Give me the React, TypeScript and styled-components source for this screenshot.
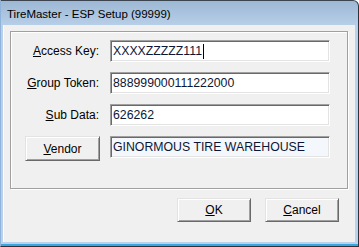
import React from "react";
import styled, { createGlobalStyle } from "styled-components";

const Global = createGlobalStyle`
  html, body { margin: 0; padding: 0; background: #ffffff; }
  body { width: 359px; height: 247px; overflow: hidden; }
  * { box-sizing: border-box; }
`;

const Window = styled.div`
  width: 359px;
  height: 247px;
  display: flex;
  flex-direction: column;
  background: linear-gradient(#9db8d5 0px, #b8cfe8 25px, #b9d1ea 26px);
  border-top: 1px solid #3c4450;
  border-right: 1px solid #2c333c;
  border-bottom: 1px solid #2c333c;
  border-left: 1px solid #8fb3da;
  border-top-right-radius: 6px;
  font-family: "Liberation Sans", Arial, sans-serif;
`;

const TitleBar = styled.div`
  height: 24px;
  flex: none;
  display: flex;
  align-items: center;
  padding: 2px 0 0 6px;
  font-family: "Liberation Sans", Arial, sans-serif;
  font-size: 11.5px;
  color: #000;
`;

const Frame = styled.div`
  flex: 1;
  display: flex;
  padding: 0 3px 2px 2px;
  border-bottom: 2px solid #3aa6e0;
`;

const Client = styled.div`
  flex: 1;
  display: flex;
  flex-direction: column;
  background: #f0f0f0;
  border-left: 1px solid #ffffff;
  padding: 6px 7px 0 6px;
`;

const GroupBox = styled.div`
  border: 1px solid #a0a0a0;
  box-shadow: inset 1px 1px 0 #ffffff, 1px 1px 0 #ffffff;
  display: grid;
  grid-template-columns: 88px 220px;
  column-gap: 11px;
  row-gap: 10px;
  grid-auto-rows: 22px;
  align-items: center;
  padding: 8px 14px 30px 0;
`;

const Label = styled.label`
  justify-self: end;
  font-size: 12px;
  color: #000;
  white-space: nowrap;
`;

const Field = styled.div<{ $readOnly?: boolean }>`
  height: 22px;
  display: flex;
  align-items: center;
  padding: 0 0 0 2px;
  font-size: 12.3px;
  color: #0c1634;
  white-space: nowrap;
  overflow: hidden;
  background: ${(p) => (p.$readOnly ? "#f4f8fd" : "#ffffff")};
  border-top: 1px solid #a0a0a0;
  border-left: 1px solid #a0a0a0;
  border-right: 1px solid #ffffff;
  border-bottom: 1px solid #ffffff;
  box-shadow: inset 1px 1px 0 #696969, inset -1px -1px 0 #e3e3e3;
  align-self: ${(p) => (p.$readOnly ? "start" : "center")};
`;

const Caret = styled.span`
  display: inline-block;
  width: 1px;
  height: 15px;
  background: #000;
  margin-left: 1px;
`;

const Button = styled.button<{ $width?: number }>`
  width: ${(p) => p.$width ?? 74}px;
  height: 24px;
  padding: 0;
  margin: 0;
  font-family: "Liberation Sans", Arial, sans-serif;
  font-size: 12px;
  color: #000;
  background: #f0f0f0;
  border-top: 1px solid #e3e3e3;
  border-left: 1px solid #e3e3e3;
  border-right: 1px solid #696969;
  border-bottom: 1px solid #696969;
  box-shadow: inset 1px 1px 0 #ffffff, inset -1px -1px 0 #a0a0a0;
  display: flex;
  align-items: center;
  justify-content: center;
`;

const VendorButton = styled(Button)`
  height: 25px;
  justify-self: start;
  align-self: start;
  margin-left: 14px;
`;

const ButtonRow = styled.div`
  display: flex;
  justify-content: flex-end;
  gap: 14px;
  padding: 9px 9px 0 0;
`;

export default function App() {
  return (
    <>
      <Global />
      <Window>
        <TitleBar>TireMaster - ESP Setup (99999)</TitleBar>
        <Frame>
          <Client>
            <GroupBox>
              <Label>
                <u>A</u>ccess Key:
              </Label>
              <Field>
                XXXXZZZZZ111
                <Caret />
              </Field>
              <Label>
                <u>G</u>roup Token:
              </Label>
              <Field>888999000111222000</Field>
              <Label>
                <u>S</u>ub Data:
              </Label>
              <Field>626262</Field>
              <VendorButton $width={75}>
                <span>
                  <u>V</u>endor
                </span>
              </VendorButton>
              <Field $readOnly>GINORMOUS TIRE WAREHOUSE</Field>
            </GroupBox>
            <ButtonRow>
              <Button>
                <span>
                  <u>O</u>K
                </span>
              </Button>
              <Button>
                <span>
                  <u>C</u>ancel
                </span>
              </Button>
            </ButtonRow>
          </Client>
        </Frame>
      </Window>
    </>
  );
}
